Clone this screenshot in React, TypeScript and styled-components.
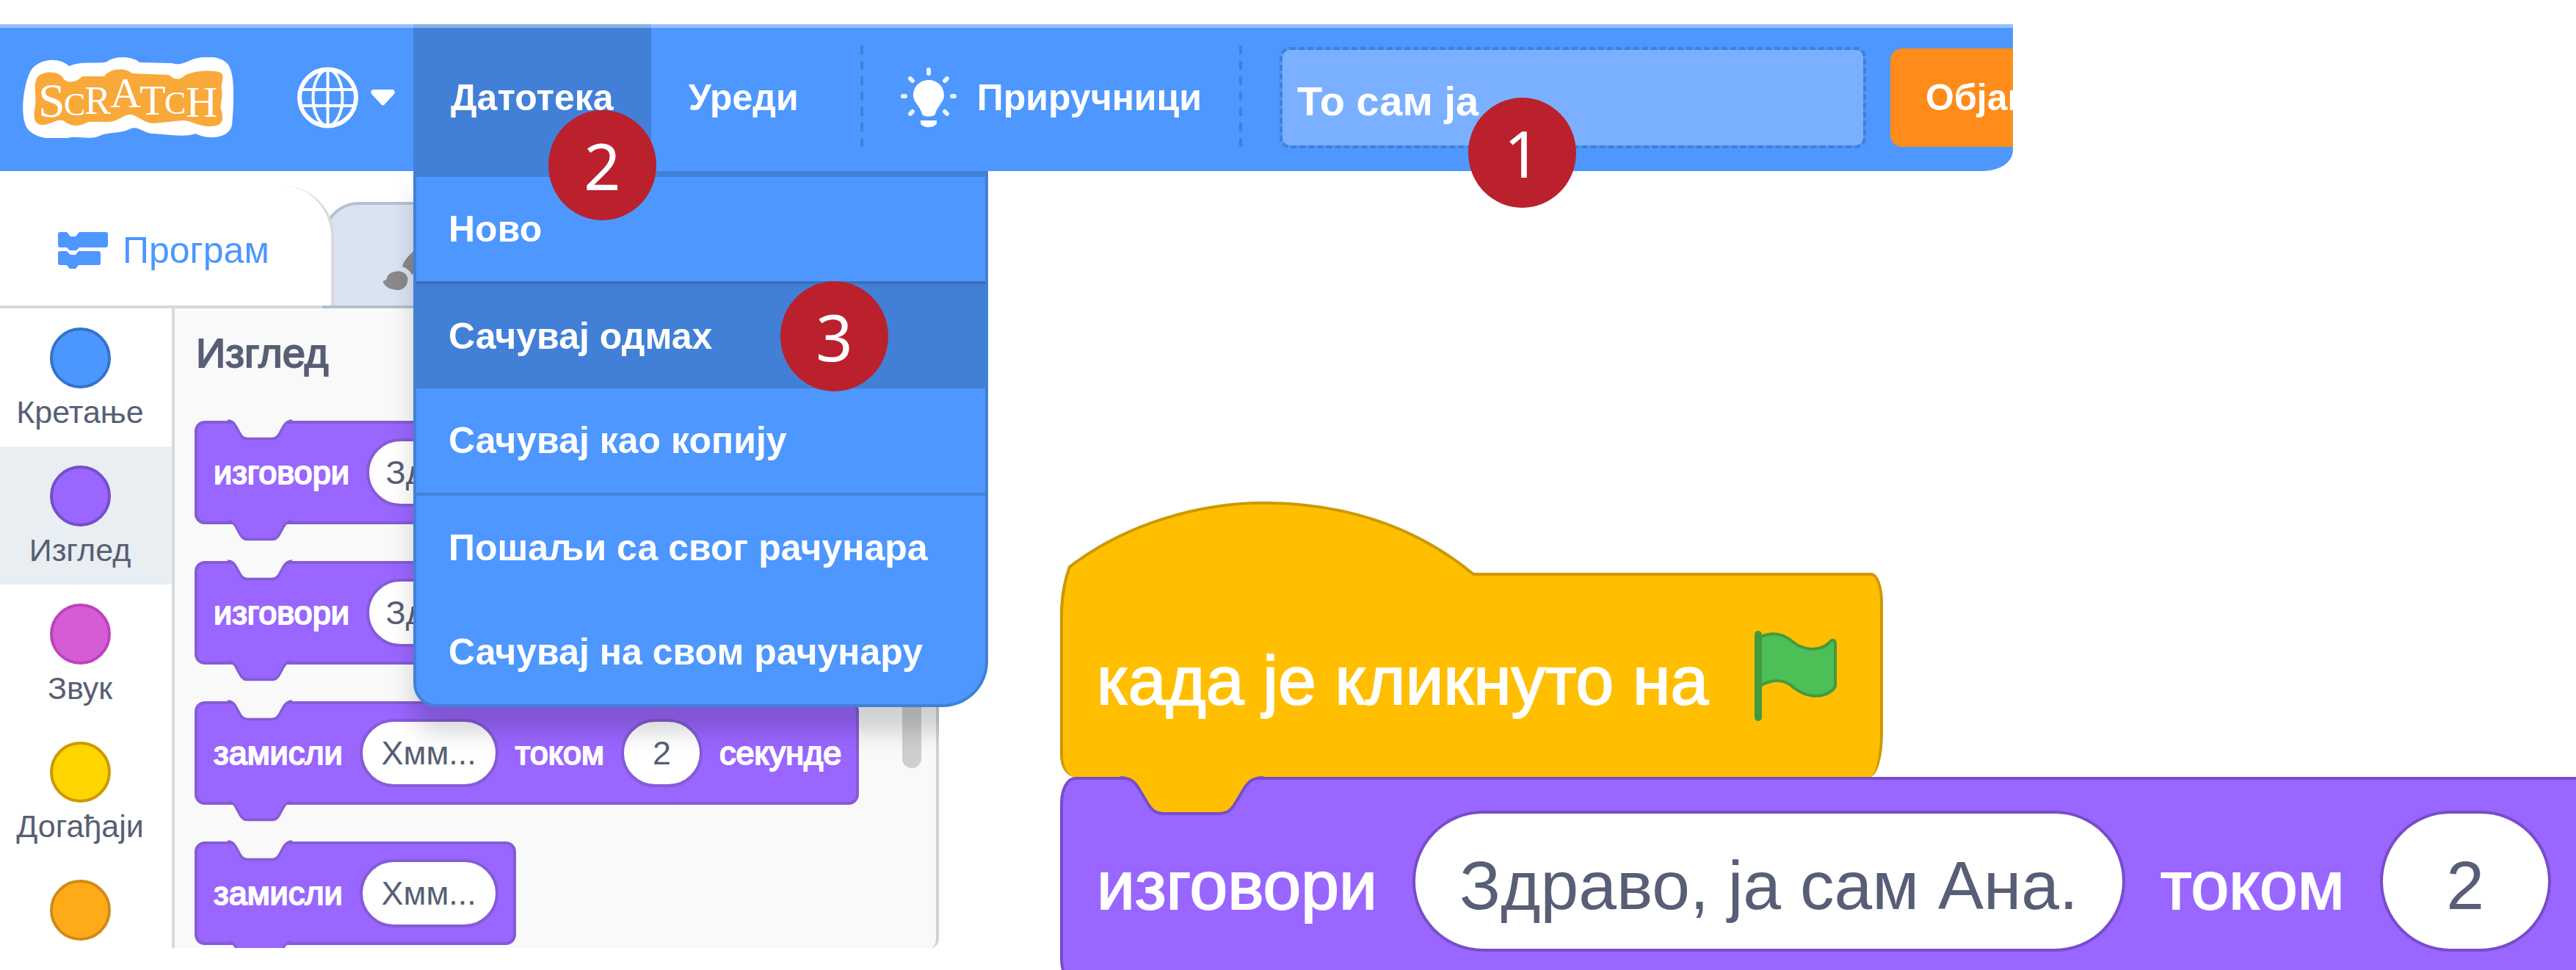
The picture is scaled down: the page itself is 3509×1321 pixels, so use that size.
import React from "react";
import styled, { createGlobalStyle } from "styled-components";

const BLUE = "#4d97ff";
const BLUE_DARK = "#4280d7";
const PURPLE = "#9966ff";
const PALETTE_BG = "#f9f9f9";

const GlobalStyle = createGlobalStyle`
  *, *::before, *::after { box-sizing: border-box; }
  body {
    margin: 0;
    background: #ffffff;
    font-family: "Liberation Sans", Arial, sans-serif;
  }
  button, input { font-family: inherit; }
`;

const Page = styled.div`
  height: 100vh;
  overflow: hidden;
  padding-top: 33px;
`;

/* ---------- top bar ---------- */

const Header = styled.header`
  position: relative;
  z-index: 2;
  display: flex;
  align-items: center;
  height: 200px;
  margin-right: 767px;
  padding-left: 30px;
  background: ${BLUE};
  border-bottom-right-radius: 40px 28px;
  box-shadow: inset 0 5px 0 #94c0ff;
`;

const LogoLink = styled.a`
  display: block;
  width: 288px;
  height: 110px;
  margin-right: 62px;
`;

const BarButton = styled.button<{ $active?: boolean }>`
  display: flex;
  align-items: center;
  gap: 28px;
  height: 200px;
  padding: 0 51px;
  border: 0;
  background: ${(p) => (p.$active ? BLUE_DARK : "transparent")};
  box-shadow: ${(p) => (p.$active ? "inset 0 5px 0 #89aee4" : "none")};
  color: #ffffff;
  font-size: 50px;
  font-weight: 700;
  white-space: nowrap;
`;

const LanguageButton = styled(BarButton)`
  gap: 17px;
  padding: 0 25px;
`;

const Divider = styled.div`
  width: 4px;
  height: 142px;
  flex: none;
  background: repeating-linear-gradient(${BLUE_DARK} 0 12px, transparent 12px 21px);
`;

const MenuAnchor = styled.div`
  position: relative;
`;

const EditSlot = styled.div`
  margin-right: 33px;
`;

const TitleField = styled.label`
  position: relative;
  flex: 1;
  min-width: 0;
  margin: 0 33px 0 51px;
`;

const TitleInput = styled.input`
  display: block;
  width: 100%;
  height: 138px;
  padding: 8px 20px 0;
  border: 4px dashed ${BLUE_DARK};
  border-radius: 14px;
  background: #7ab0ff;
  background-clip: padding-box;
  color: #ffffff;
  font-size: 56px;
  font-weight: 700;
  outline: 0;
`;

const PublishSlot = styled.div`
  flex: none;
  width: 167px;
  overflow: hidden;
`;

const PublishButton = styled.button`
  height: 134px;
  padding: 0 48px;
  border: 0;
  border-radius: 16px;
  background: #ff8c1a;
  color: #ffffff;
  font-size: 50px;
  font-weight: 700;
`;

const Menu = styled.ul`
  position: absolute;
  top: 100%;
  left: 0;
  width: 783px;
  margin: 0;
  padding: 0;
  list-style: none;
  background: ${BLUE};
  border: 4px solid ${BLUE_DARK};
  border-top-width: 8px;
  border-radius: 0 0 62px 32px;

  &::before {
    content: "";
    position: absolute;
    z-index: -1;
    inset: -8px -4px -4px;
    border-radius: inherit;
    box-shadow: 0 33px 33px rgba(0, 0, 0, 0.17);
    clip-path: inset(0 67px -80px -80px);
  }
`;

const MenuRow = styled.li<{ $divided?: string }>`
  position: relative;
  border-top: ${(p) => (p.$divided ? `4px solid ${p.$divided}` : "0")};
`;

const MenuButton = styled.button<{ $active?: boolean }>`
  display: block;
  width: 100%;
  height: 142px;
  padding: 0 44px;
  border: 0;
  background: ${(p) => (p.$active ? BLUE_DARK : "transparent")};
  color: #ffffff;
  font-size: 50px;
  font-weight: 700;
  text-align: left;
  white-space: nowrap;
`;

const Badge = styled.span<{ $left: number; $top: number }>`
  position: absolute;
  z-index: 3;
  left: ${(p) => p.$left}px;
  top: ${(p) => p.$top}px;
  display: flex;
  align-items: center;
  justify-content: center;
  width: 147px;
  height: 150px;
  border-radius: 50%;
  background: #ba212d;
  color: #ffffff;
  font-family: "Noto Sans", sans-serif;
  font-size: 88px;
  line-height: 1;
`;

/* ---------- editor ---------- */

const Main = styled.main`
  display: flex;
`;

const Editor = styled.section`
  flex: none;
  width: 1279px;
`;

const Tabs = styled.div`
  display: flex;
  align-items: flex-end;
  height: 187px;
  border-bottom: 4px solid #d9d9d9;
`;

const CodeTab = styled.button`
  position: relative;
  z-index: 1;
  display: flex;
  align-items: center;
  gap: 20px;
  width: 455px;
  height: 163px;
  padding: 13px 0 0 79px;
  border: 0;
  border-right: 4px solid #d9d9d9;
  border-radius: 70px 70px 0 0;
  background: #ffffff;
  color: ${BLUE};
  font-size: 50px;
`;

const CostumeTab = styled.button`
  width: 400px;
  height: 145px;
  margin: 0 0 -4px -16px;
  padding: 33px 0 0 78px;
  border: 4px solid #b5bfd0;
  border-radius: 50px 50px 0 0;
  background: #d9e3f2;
  text-align: left;
`;

const EditorBody = styled.div`
  display: flex;
  height: 871px;
  overflow: hidden;
`;

const Categories = styled.nav`
  flex: none;
  width: 238px;
  border-right: 4px solid #d9d9d9;
`;

const Category = styled.button<{ $active?: boolean }>`
  display: flex;
  flex-direction: column;
  align-items: center;
  gap: 8px;
  width: 100%;
  height: 188px;
  padding: 26px 16px 0 0;
  border: 0;
  background: ${(p) => (p.$active ? "#e9eef2" : "#ffffff")};
  color: #575e75;
  font-size: 43px;
  line-height: 48px;
  white-space: nowrap;
`;

const Bubble = styled.span<{ $fill: string; $edge: string }>`
  flex: none;
  width: 83px;
  height: 83px;
  border: 4px solid ${(p) => p.$edge};
  border-radius: 50%;
  background: ${(p) => p.$fill};
`;

const Palette = styled.div`
  position: relative;
  flex: 1;
  overflow: hidden;
  padding: 27px 0 0 27px;
  background: ${PALETTE_BG};
  border-right: 4px solid #d2d2d2;
  border-bottom-right-radius: 12px;
`;

const PaletteTitle = styled.h2`
  margin: 0 0 58px;
  padding-left: 2px;
  color: #575e75;
  font-size: 56px;
  line-height: 68px;
  font-weight: 400;
  -webkit-text-stroke: 2px #575e75;
`;

const BlockList = styled.div`
  display: flex;
  flex-direction: column;
  align-items: flex-start;
  gap: 50px;
`;

const Scrollbar = styled.div`
  position: absolute;
  top: 40px;
  right: 20px;
  width: 26px;
  height: 586px;
  border-radius: 13px;
  background: #cecece;
`;

/* ---------- blocks ---------- */

const Block = styled.div`
  position: relative;
  flex: none;
  display: flex;
  align-items: center;
  gap: 23px;
  height: 141px;
  padding: 0 20px 0 22px;
  border: 4px solid #855cd6;
  border-radius: 14px;
  background: ${PURPLE};
  color: #ffffff;
  font-size: 45px;
  white-space: nowrap;
`;

const Label = styled.span`
  -webkit-text-stroke: 2px #ffffff;
`;

const Value = styled.input<{ $width: number }>`
  width: ${(p) => p.$width}px;
  height: 93px;
  padding: 0;
  border: 4px solid #855cd6;
  border-radius: 47px;
  background: #ffffff;
  color: #575e75;
  font-size: 45px;
  text-align: center;
  outline: 0;
`;

const NotchSvg = styled.svg<{ $big?: boolean; $bottom?: boolean }>`
  position: absolute;
  left: ${(p) => (p.$big ? 78 : 41)}px;
  top: ${(p) => (p.$bottom ? "calc(100% - 1px)" : "-5px")};
  width: ${(p) => (p.$big ? 195 : 88)}px;
  height: ${(p) => (p.$big ? 54 : 27)}px;
  overflow: visible;
`;

const Workspace = styled.section`
  flex: 1;
  min-width: 0;
  display: flex;
  flex-direction: column;
  align-items: flex-start;
  padding: 547px 0 0 165px;
`;

const HatBlock = styled.div`
  position: relative;
  display: flex;
  align-items: center;
  gap: 61px;
  height: 278px;
  padding: 0 58px 0 46px;
  border: 4px solid #cc9900;
  border-bottom: 0;
  border-radius: 14px 16px 18px 20px / 60px 40px 60px 30px;
  background: #ffbf00;
  color: #ffffff;
  font-size: 93px;
  white-space: nowrap;
`;

const Dome = styled.svg`
  position: absolute;
  left: -4px;
  top: -101px;
  width: 570px;
  height: 150px;
`;

const StackBlock = styled.div`
  position: relative;
  align-self: stretch;
  display: flex;
  align-items: center;
  gap: 48px;
  height: 284px;
  padding-left: 46px;
  border: 4px solid #774dcb;
  border-right: 0;
  border-radius: 20px 0 0 20px / 36px 0 0 36px;
  background: ${PURPLE};
  color: #ffffff;
  font-size: 93px;
  white-space: nowrap;
`;

const BigLabel = styled.span`
  padding-top: 12px;
  -webkit-text-stroke: 2px #ffffff;
`;

const BigValue = styled.input<{ $width: number }>`
  flex: none;
  width: ${(p) => p.$width}px;
  height: 192px;
  padding: 12px 0 0;
  border: 4px solid #774dcb;
  border-radius: 96px;
  background: #ffffff;
  color: #575e75;
  font-size: 93px;
  text-align: center;
  outline: 0;
`;

/* ---------- drawings ---------- */

const NOTCH =
  "M0 2 C14 2 20 8 26 18 L38 38 C44 48 50 51 60 51 L134 51 C144 51 150 48 156 38 L168 18 C175 6 182 2 195 2";

const Notch = ({
  fill,
  edge,
  big,
  bottom,
}: {
  fill: string;
  edge: string;
  big?: boolean;
  bottom?: boolean;
}) => (
  <NotchSvg viewBox="0 0 195 54" preserveAspectRatio="none" $big={big} $bottom={bottom} aria-hidden="true">
    <path d={`M0 -8 ${NOTCH.replace("M", "L")} L195 -8 Z`} fill={fill} />
    <path d={NOTCH} fill="none" stroke={edge} strokeWidth={big ? 4 : 7} />
  </NotchSvg>
);

const Logo = () => (
  <svg width="288" height="110" viewBox="0 0 288 110" role="img" aria-label="Scratch">
    <path
      d="M10 22 C18 2 50 -2 64 12 C84 4 104 10 116 6 C126 -2 150 -2 160 7 L204 8 C216 12 224 6 232 3 C250 -3 274 -2 282 12 C291 28 288 70 286 92 C282 112 252 112 236 104 C222 110 190 104 178 104 C166 104 158 92 146 98 C134 104 118 102 108 106 C94 114 76 106 62 110 C44 112 20 112 8 98 C-4 82 2 40 10 22 Z"
      fill="#ffffff"
    />
    <path
      d="M22 26 C30 18 52 18 57 30 C64 36 74 34 82 26 L112 26 C120 14 142 14 150 22 L200 24 C206 30 214 32 220 26 C230 18 264 16 272 22 C276 30 270 36 272 44 C274 58 268 66 272 74 C276 92 268 94 254 94 C240 94 230 86 218 86 L180 90 C166 90 160 80 148 78 C138 78 130 88 118 88 L90 88 C76 96 66 94 56 86 C44 84 40 92 28 92 C14 92 16 78 18 66 C20 54 14 36 22 26 Z"
      fill="#f9a83a"
    />
    <text y="77" fill="#ffffff" fontFamily="Liberation Serif, serif" fontWeight="400" fontSize="56">
      <tspan x="22" y="81" fontSize="66">S</tspan>
      <tspan x="57" y="79" fontSize="44">C</tspan>
      <tspan x="85" y="77" fontSize="54">R</tspan>
      <tspan x="120" y="68" fontSize="58">A</tspan>
      <tspan x="160" y="78" fontSize="58">T</tspan>
      <tspan x="194" y="77" fontSize="44">C</tspan>
      <tspan x="223" y="81" fontSize="60">H</tspan>
    </text>
  </svg>
);

const Globe = () => (
  <svg width="83" height="84" viewBox="0 0 83 84" fill="none" stroke="#ffffff" strokeWidth="4" aria-hidden="true">
    <circle cx="41.5" cy="42" r="38.5" strokeWidth="6" />
    <ellipse cx="41.5" cy="42" rx="20" ry="38" />
    <path d="M41.5 4 V80" />
    <path d="M7 31 H76 M7 53 H76" />
  </svg>
);

const Caret = () => (
  <svg width="33" height="22" viewBox="0 0 33 22" aria-hidden="true">
    <path d="M4 0 H29 C33 0 34 4 31 7 L19 20 C17 22 16 22 14 20 L2 7 C-1 4 0 0 4 0 Z" fill="#ffffff" />
  </svg>
);

const Bulb = () => (
  <svg width="76" height="84" viewBox="0 0 76 84" fill="#ffffff" aria-hidden="true">
    <path d="M38 18 C50 18 59 27 59 39 C59 48 50 53 47 64 C46 69 30 69 29 64 C26 53 17 48 17 39 C17 27 26 18 38 18 Z" />
    <path d="M27 73 H49 V77 C46 84 30 84 27 77 Z" />
    <g stroke="#ffffff" strokeWidth="6" strokeLinecap="round" opacity="0.9">
      <path d="M38 4 V9 M13 16 L16 19 M63 16 L60 19 M3 40 H6 M70 40 H73 M13 64 L16 61 M63 64 L60 61" />
    </g>
  </svg>
);

const CodeIcon = () => (
  <svg width="68" height="50" viewBox="0 0 68 50" fill={BLUE} aria-hidden="true">
    <path d="M3 0 H12 L17 6 H24 L29 0 H65 Q68 0 68 3 V17 Q68 21 65 21 H29 L25 25 H16 L12 21 H3 Q0 21 0 17 V3 Q0 0 3 0 Z" />
    <path d="M3 26 H12 L17 31 H24 L28 26 H55 Q58 26 58 29 V42 Q58 45 55 45 H28 L24 50 H16 L12 45 H3 Q0 45 0 42 V29 Q0 26 3 26 Z" />
  </svg>
);

const Brush = () => (
  <svg width="76" height="76" viewBox="0 0 76 76" fill="#8a8a8a" aria-hidden="true">
    <path d="M17 45 C27 42 37 50 34 59 C32 69 22 72 14 69 C8 68 4 65 1 60 C0 56 5 58 6 54 C7 49 10 46 17 45 Z" />
    <path d="M27 38 C30 26 46 12 66 2 C72 0 75 4 73 9 C65 28 52 44 40 49 C38 44 32 40 27 38 Z" />
  </svg>
);

const Flag = () => (
  <svg width="115" height="124" viewBox="0 0 115 124" aria-hidden="true">
    <path
      d="M8 10 C24 0 42 4 54 15 C70 28 92 28 104 16 C108 11 112 12 112 18 V74 C112 79 108 81 104 84 C90 92 72 90 56 78 C42 64 24 66 8 76 Z"
      fill="#4cbf56"
      stroke="#45993d"
      strokeWidth="4"
      strokeLinejoin="round"
    />
    <path d="M7 5 V118" stroke="#45993d" strokeWidth="10" strokeLinecap="round" />
  </svg>
);

/* ---------- content ---------- */

const categories = [
  { name: "Кретање", fill: "#4c97ff", edge: "#3373cc" },
  { name: "Изглед", fill: "#9966ff", edge: "#774dcb", active: true },
  { name: "Звук", fill: "#d65cd6", edge: "#bd42bd" },
  { name: "Догађаји", fill: "#ffd500", edge: "#cc9900" },
  { name: "", fill: "#ffab19", edge: "#cf8b17" },
];

type Part = string | { value: string; width: number };

const paletteBlocks: Part[][] = [
  ["изговори", { value: "Здраво!", width: 218 }],
  ["изговори", { value: "Здраво!", width: 218 }],
  ["замисли", { value: "Хмм...", width: 189 }, "током", { value: "2", width: 111 }, "секунде"],
  ["замисли", { value: "Хмм...", width: 189 }],
];

const menuItems = [
  { text: "Ново" },
  { text: "Сачувај одмах", active: true, divided: "#3a6fbb", badge: "3" },
  { text: "Сачувај као копију" },
  { text: "Пошаљи са свог рачунара", divided: BLUE_DARK },
  { text: "Сачувај на свом рачунару" },
];

export default function App() {
  return (
    <Page>
      <GlobalStyle />
      <Header>
        <LogoLink href="#">
          <Logo />
        </LogoLink>
        <LanguageButton aria-label="Језик">
          <Globe />
          <Caret />
        </LanguageButton>
        <MenuAnchor>
          <BarButton $active>Датотека</BarButton>
          <Menu>
            {menuItems.map((item) => (
              <MenuRow key={item.text} $divided={item.divided}>
                <MenuButton $active={item.active}>{item.text}</MenuButton>
                {item.badge && (
                  <Badge $left={496} $top={-4}>
                    {item.badge}
                  </Badge>
                )}
              </MenuRow>
            ))}
          </Menu>
          <Badge $left={184} $top={117}>
            2
          </Badge>
        </MenuAnchor>
        <EditSlot>
          <BarButton>Уреди</BarButton>
        </EditSlot>
        <Divider />
        <BarButton>
          <Bulb />
          Приручници
        </BarButton>
        <Divider />
        <TitleField>
          <TitleInput defaultValue="То сам ја" aria-label="Назив пројекта" />
          <Badge $left={257} $top={69}>
            1
          </Badge>
        </TitleField>
        <PublishSlot>
          <PublishButton>Објави</PublishButton>
        </PublishSlot>
      </Header>

      <Main>
        <Editor>
          <Tabs>
            <CodeTab>
              <CodeIcon />
              Програм
            </CodeTab>
            <CostumeTab aria-label="Костими">
              <Brush />
            </CostumeTab>
          </Tabs>
          <EditorBody>
            <Categories>
              {categories.map((c) => (
                <Category key={c.fill} $active={c.active}>
                  <Bubble $fill={c.fill} $edge={c.edge} />
                  {c.name}
                </Category>
              ))}
            </Categories>
            <Palette>
              <PaletteTitle>Изглед</PaletteTitle>
              <BlockList>
                {paletteBlocks.map((parts, i) => (
                  <Block key={i}>
                    <Notch fill={PALETTE_BG} edge="#855cd6" />
                    <Notch fill={PURPLE} edge="#855cd6" bottom />
                    {parts.map((part, j) =>
                      typeof part === "string" ? (
                        <Label key={j}>{part}</Label>
                      ) : (
                        <Value key={j} $width={part.width} defaultValue={part.value} aria-label={String(parts[0])} />
                      )
                    )}
                  </Block>
                ))}
              </BlockList>
              <Scrollbar />
            </Palette>
          </EditorBody>
        </Editor>

        <Workspace>
          <HatBlock>
            <Dome viewBox="0 0 570 150" aria-hidden="true">
              <path
                d="M13 89 C90 30 190 2 277 2 C380 2 480 30 563 99 L566 110 L530 150 H4 C4 130 7 105 13 89 Z"
                fill="#ffbf00"
              />
              <path
                d="M2 150 C3 125 7 105 13 89 C90 30 190 2 277 2 C380 2 480 30 563 99 H570"
                fill="none"
                stroke="#cc9900"
                strokeWidth="4"
              />
            </Dome>
            <BigLabel>када је кликнуто на</BigLabel>
            <Flag />
          </HatBlock>
          <StackBlock>
            <Notch fill="#ffbf00" edge="#774dcb" big />
            <BigLabel>изговори</BigLabel>
            <BigValue $width={971} defaultValue="Здраво, ја сам Ана." aria-label="изговори" />
            <BigLabel>током</BigLabel>
            <BigValue $width={233} defaultValue="2" aria-label="током" />
          </StackBlock>
        </Workspace>
      </Main>
    </Page>
  );
}
